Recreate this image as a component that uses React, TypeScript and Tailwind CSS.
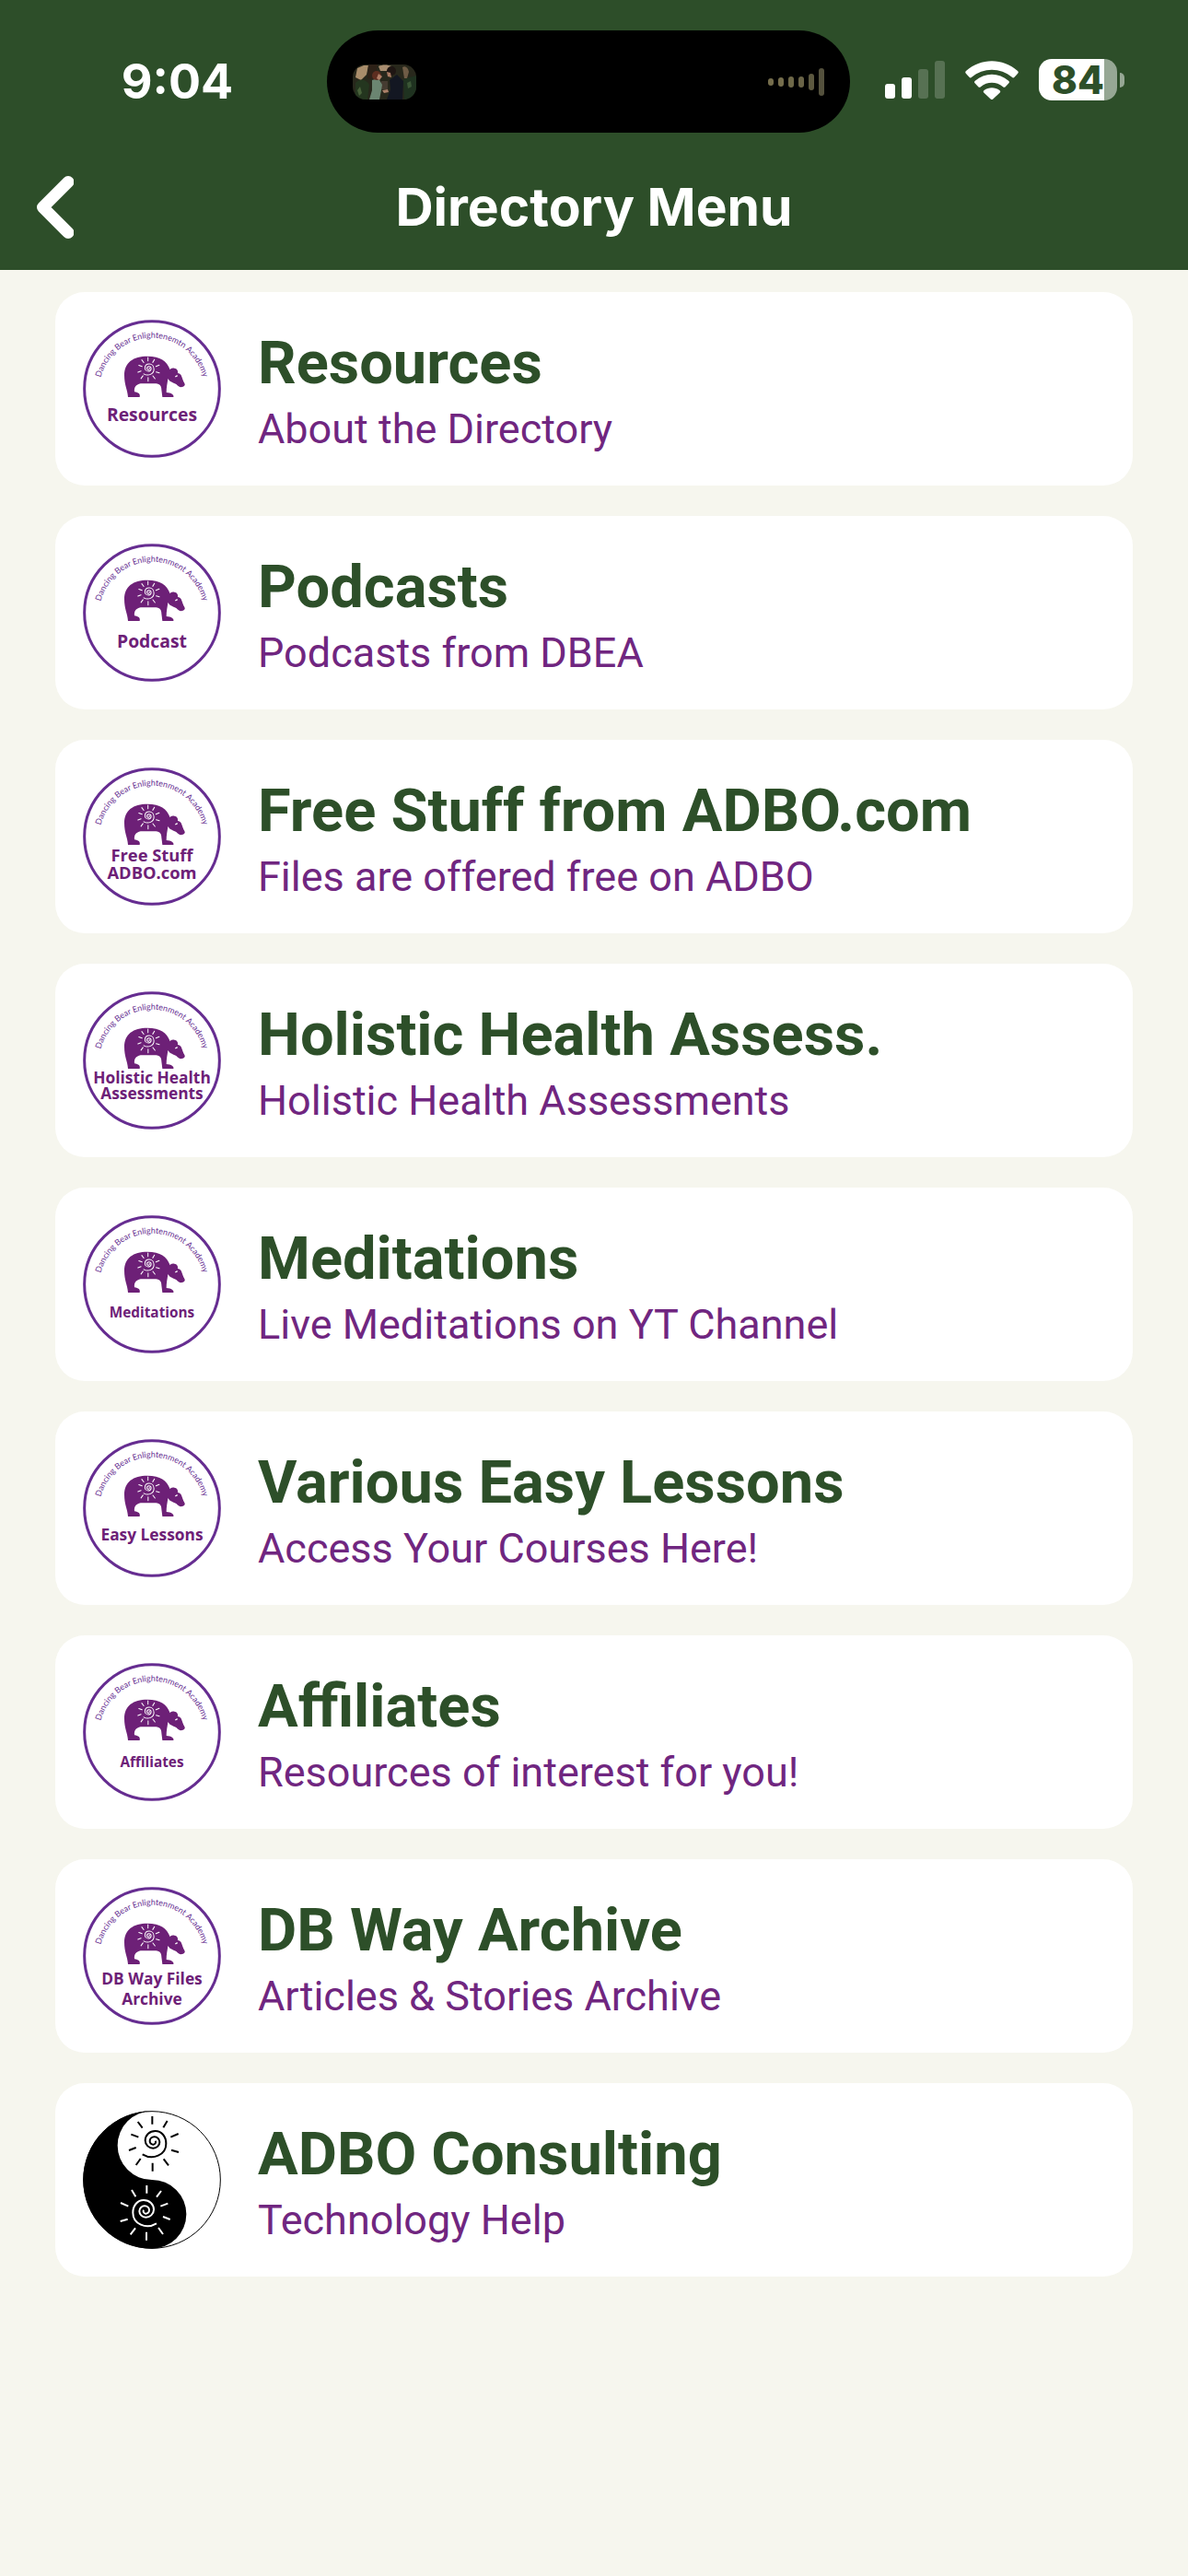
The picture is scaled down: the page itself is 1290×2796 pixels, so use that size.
import { useId } from "react";

type BadgeLine = { text: string; y: number; size: number };

type MenuItem = {
  title: string;
  subtitle: string;
  arc?: string;
  lines?: BadgeLine[];
};

const ACADEMY = "Dancing Bear Enlightenment Academy";

const MENU: MenuItem[] = [
  {
    title: "Resources",
    subtitle: "About the Directory",
    arc: "Dancing Bear Enlightenemtn Academy",
    lines: [{ text: "Resources", y: 366, size: 58 }],
  },
  {
    title: "Podcasts",
    subtitle: "Podcasts from DBEA",
    arc: ACADEMY,
    lines: [{ text: "Podcast", y: 375, size: 58 }],
  },
  {
    title: "Free Stuff from ADBO.com",
    subtitle: "Files are offered free on ADBO",
    arc: ACADEMY,
    lines: [
      { text: "Free Stuff", y: 343, size: 55 },
      { text: "ADBO.com", y: 400, size: 55 },
    ],
  },
  {
    title: "Holistic Health Assess.",
    subtitle: "Holistic Health Assessments",
    arc: ACADEMY,
    lines: [
      { text: "Holistic Health", y: 335, size: 52 },
      { text: "Assessments", y: 387, size: 52 },
    ],
  },
  {
    title: "Meditations",
    subtitle: "Live Meditations on YT Channel",
    arc: ACADEMY,
    lines: [{ text: "Meditations", y: 369, size: 46 }],
  },
  {
    title: "Various Easy Lessons",
    subtitle: "Access Your Courses Here!",
    arc: ACADEMY,
    lines: [{ text: "Easy Lessons", y: 365, size: 52 }],
  },
  {
    title: "Affiliates",
    subtitle: "Resources of interest for you!",
    arc: ACADEMY,
    lines: [{ text: "Affiliates", y: 374, size: 46 }],
  },
  {
    title: "DB Way Archive",
    subtitle: "Articles & Stories Archive",
    arc: ACADEMY,
    lines: [
      { text: "DB Way Files", y: 355, size: 52 },
      { text: "Archive", y: 419, size: 52 },
    ],
  },
  { title: "ADBO Consulting", subtitle: "Technology Help" },
];

/* Spiral sun, shared by the bear and the yin-yang */
function SpiralSun() {
  return (
    <>
      <path d="M224 178C258 198 301 180 301 143C301 118 285 102 266 102C247 102 233 115 233 133C233 148 246 158 259 158C271 158 280 148 280 138C280 128 272 121 263 121C254 121 248 128 248 135C248 142 254 147 260 146C266 145 269 139 266 134" />
      <path d="M256 54V80M305 69L292 91M341 111L316 122M342 171L318 164M309 214L293 193M257 206V233M218 192L203 213M203 156L180 165M211 122L187 113M224 92L209 72" />
    </>
  );
}

function BearBadge({ arc, lines }: { arc: string; lines: BadgeLine[] }) {
  const arcId = useId();
  return (
    <svg viewBox="30 36 450 450" className="size-[150px] shrink-0" aria-hidden="true">
      <circle cx="255" cy="261" r="220" fill="white" stroke="#662d91" strokeWidth="9" />
      <path id={arcId} d="M83 267A172 172 0 0 1 427 267" fill="none" />
      <text fill="#662d91" fontSize="27" fontFamily="Lato, sans-serif" textAnchor="middle">
        <textPath href={`#${arcId}`} startOffset="50%">
          {arc}
        </textPath>
      </text>
      <path
        fill="#6d2077"
        d="M177 288H215C218 278 211 273 198 271C196 256 203 248 218 244H268C281 246 286 252 286 264L289 288H325C328 281 318 274 302 273C302 255 305 245 307 228C314 240 326 241 334 246C340 252 346 257 354 255C362 253 364 248 361 243C356 236 354 226 350 217C348 213 344 211 339 210C341 201 336 195 328 194C322 192 316 194 314 199C303 170 283 156 240 155C194 155 165 175 165 217C165 250 175 262 177 288Z"
      />
      <path d="M331 222L338 218" stroke="white" strokeWidth="4" />
      <g
        transform="translate(132 136) scale(.43)"
        fill="none"
        stroke="white"
        strokeWidth="7"
        strokeLinecap="round"
      >
        <SpiralSun />
      </g>
      {lines.map((line) => (
        <text
          key={line.text}
          x="255"
          y={line.y}
          fontSize={line.size}
          fontWeight="700"
          fontFamily="'Open Sans', 'Noto Sans', sans-serif"
          textAnchor="middle"
          fill="#6d2077"
        >
          {line.text}
        </text>
      ))}
    </svg>
  );
}

function YinYangBadge() {
  return (
    <svg viewBox="30 36 450 450" className="size-[150px] shrink-0" aria-hidden="true">
      <circle cx="255" cy="261" r="223" fill="white" stroke="black" strokeWidth="3" />
      <path d="M255 37A224 224 0 0 0 255 485A112 112 0 0 0 255 261A112 112 0 0 1 255 37Z" />
      <g fill="none" stroke="black" strokeWidth="6">
        <SpiralSun />
      </g>
      <g transform="matrix(-1 0 0 1 494 225)" fill="none" stroke="white" strokeWidth="6">
        <SpiralSun />
      </g>
    </svg>
  );
}

/* Now-playing artwork in the island */
function Artwork() {
  return (
    <svg viewBox="0 0 69 38" className="h-[38px] w-[69px] overflow-hidden rounded-[14px]" aria-hidden="true">
      <rect width="69" height="38" fill="#28281c" />
      <path d="M5 4L12 1H17L15 11L9 17L3 14Z" fill="#a98d6b" />
      <path d="M28 2C32 0 38 0 42 2L38 7L30 7Z" fill="#a98d70" />
      <path d="M54 3C57 1 60 3 61 8L59 15H56Z" fill="#6f5c46" />
      <path d="M17 0H27L24 16L16 15Z" fill="#2e2218" />
      <path d="M3 20C8 14 15 16 18 22L16 38H3Z" fill="#24361f" />
      <path d="M5 28L8 24L10 31L7 34Z" fill="#48613a" />
      <path d="M55 16L69 12V38H56Z" fill="#1f3220" />
      <path d="M59 20L63 18L64 24L60 26Z" fill="#3b5636" />
      <path d="M31 18H38V27H31Z" fill="#453c31" />
      <path d="M21 17L28 15L32 22L31 28L29 38H18L21 28Z" fill="#6b8571" />
      <circle cx="26" cy="12" r="5" fill="#5d2e20" />
      <path d="M28 10L32 13L29 17L26 15Z" fill="#b07d65" />
      <path d="M40 17L48 11L55 18L54 38H37L41 27Z" fill="#131722" />
      <circle cx="42" cy="7" r="5" fill="#1f1613" />
      <path d="M37 8L41 9L42 14L38 13Z" fill="#a97a62" />
      <path d="M32 28L38 27L39 30L34 31Z" fill="#ab8069" />
    </svg>
  );
}

function StatusBar() {
  return (
    <div className="grid grid-cols-[355px_1fr_367px] items-center pt-[33px] text-white">
      <div className="pl-[30px] text-center text-[52px] leading-none font-bold">9:04</div>

      <div className="flex h-[111px] items-center justify-between rounded-full bg-black px-7">
        <Artwork />
        <div className="flex items-center gap-[5px]">
          <span className="h-2 w-1.5 rounded-full bg-[#756d4c]" />
          <span className="h-2.5 w-1.5 rounded-full bg-[#756d4c]" />
          <span className="h-3 w-1.5 rounded-full bg-[#6e6848]" />
          <span className="h-3 w-1.5 rounded-full bg-[#6a6447]" />
          <span className="h-[18px] w-1.5 rounded-full bg-[#5d5940]" />
          <span className="h-[30px] w-1.5 rounded-full bg-[#54513d]" />
        </div>
      </div>

      <div className="flex items-center pb-1 pl-[38px]">
        <div className="flex items-end gap-[7px]">
          <span className="h-4 w-[11px] rounded-[3px] bg-white" />
          <span className="h-[23px] w-[11px] rounded-[3px] bg-white" />
          <span className="h-8 w-[11px] rounded-[3px] bg-white/20" />
          <span className="h-[41px] w-[11px] rounded-[3px] bg-white/20" />
        </div>
        <svg viewBox="0 0 58 42" className="ml-[22px] h-[42px] w-[58px]" fill="white" aria-hidden="true">
          <path d="M1.300 14.200C-.1 12.900-.1 12 1 10.900C17-3.300 41-3.300 57 10.900C58.100 12 58.100 12.900 56.700 14.200L53.500 17.700C52.600 18.700 51.800 18.600 50.900 17.800C38.500 7 19.500 7 7.100 17.800C6.200 18.600 5.400 18.700 4.500 17.700Z" />
          <path d="M10.800 24.500C9.700 23.400 9.800 22.600 10.800 21.700C21.500 12.500 36.500 12.500 47.200 21.700C48.200 22.600 48.300 23.400 47.200 24.500L43.700 28.200C42.800 29 42 29 41.100 28.200C34 22.400 24 22.400 16.900 28.200C16 29 15.200 29 14.300 28.200Z" />
          <path d="M20.500 34.800C19.400 33.600 19.500 32.800 20.600 31.900C25.600 28.200 32.400 28.200 37.400 31.900C38.500 32.800 38.600 33.600 37.500 34.800L30.300 41.600C29.400 42.300 28.600 42.300 27.700 41.600Z" />
        </svg>
        <div className="ml-[22px] flex items-center gap-[3px]">
          <div className="flex h-[45px] w-[85px] items-center justify-center rounded-[14px] bg-linear-to-r from-white from-84% to-[#96a794] to-84%">
            <span className="text-[42px] leading-none font-extrabold text-[#2d4f29]">84</span>
          </div>
          <span className="h-4 w-[5px] rounded-r-full bg-[#96a794]" />
        </div>
      </div>
    </div>
  );
}

export default function App() {
  return (
    <div className="min-h-screen bg-[#f6f6ee]">
      <header className="bg-[#2d4e29] font-['Inter',sans-serif]">
        <StatusBar />
        <nav className="grid h-[149px] grid-cols-[1fr_auto_1fr] items-center pt-3 text-white">
          <button type="button" aria-label="Back" className="ml-10 w-10">
            <svg viewBox="0 0 40 68" className="h-[68px] w-10" fill="none" aria-hidden="true">
              <path
                d="M34 6.500L6.500 34L34 61.500"
                stroke="white"
                strokeWidth="13"
                strokeLinecap="round"
                strokeLinejoin="round"
              />
            </svg>
          </button>
          <h1 className="text-[57px] leading-none font-bold">Directory Menu</h1>
        </nav>
      </header>

      <main className="px-[60px] pt-6 font-['Roboto',sans-serif]">
        <ul className="flex flex-col gap-[33px]">
          {MENU.map((item) => (
            <li key={item.title}>
              <a href="#" className="flex h-[210px] items-center gap-10 rounded-[32px] bg-white px-[30px]">
                {item.arc && item.lines ? <BearBadge arc={item.arc} lines={item.lines} /> : <YinYangBadge />}
                <div>
                  <h2 className="text-[65px] leading-[88px] font-bold text-[#2d4f29]">{item.title}</h2>
                  <p className="text-[45px] leading-[56px] text-[#702680]">{item.subtitle}</p>
                </div>
              </a>
            </li>
          ))}
        </ul>
      </main>
    </div>
  );
}
